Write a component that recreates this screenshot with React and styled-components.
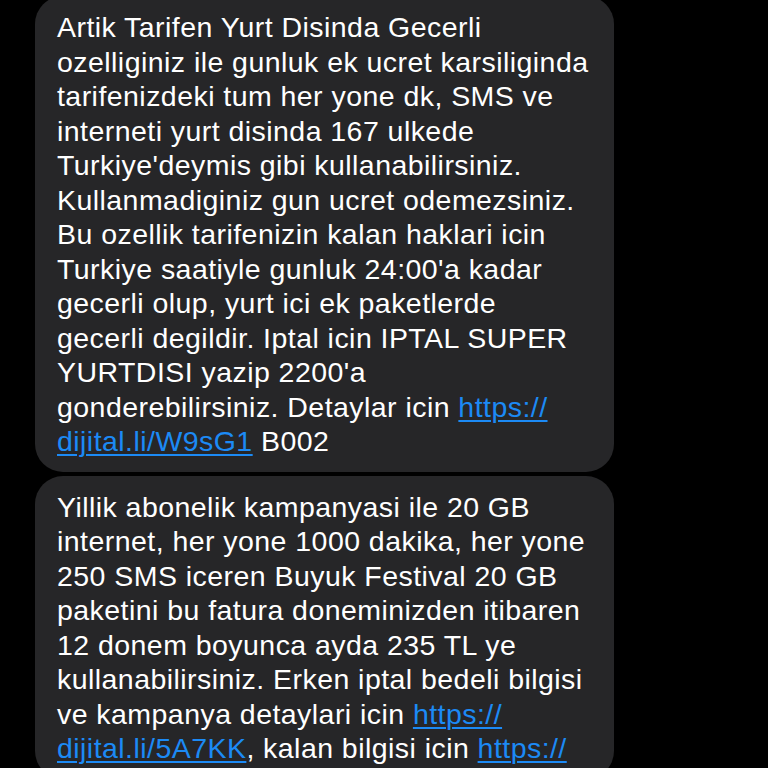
import React from "react";
import styled, { createGlobalStyle } from "styled-components";

const GlobalStyle = createGlobalStyle`
  html, body {
    margin: 0;
    padding: 0;
    background: #000;
    overflow: hidden;
  }
`;

const Thread = styled.div`
  display: flex;
  flex-direction: column;
  gap: 4px;
  padding-left: 35px;
  margin-top: -4px;
  height: 772px;
  overflow: hidden;
`;

const Bubble = styled.div`
  width: 579px;
  box-sizing: border-box;
  padding: 14px 0 13px 22px;
  background: #262628;
  border-radius: 28px;
  color: #fff;
  font-family: "Liberation Sans", Arial, sans-serif;
  font-size: 28.5px;
  letter-spacing: 0.45px;
  line-height: 34.5px;
  white-space: nowrap;
`;

const Line = styled.div``;

const Link = styled.a`
  color: #1c8af5;
  text-decoration: underline;
  text-decoration-thickness: 1.5px;
  text-underline-offset: 3px;
`;

const first = [
  "Artik Tarifen Yurt Disinda Gecerli",
  "ozelliginiz ile gunluk ek ucret karsiliginda",
  "tarifenizdeki tum her yone dk, SMS ve",
  "interneti yurt disinda 167 ulkede",
  "Turkiye'deymis gibi kullanabilirsiniz.",
  "Kullanmadiginiz gun ucret odemezsiniz.",
  "Bu ozellik tarifenizin kalan haklari icin",
  "Turkiye saatiyle gunluk 24:00'a kadar",
  "gecerli olup, yurt ici ek paketlerde",
  "gecerli degildir. Iptal icin IPTAL SUPER",
  "YURTDISI yazip 2200'a",
];

const second = [
  "Yillik abonelik kampanyasi ile 20 GB",
  "internet, her yone 1000 dakika, her yone",
  "250 SMS iceren Buyuk Festival 20 GB",
  "paketini bu fatura doneminizden itibaren",
  "12 donem boyunca ayda 235 TL ye",
  "kullanabilirsiniz. Erken iptal bedeli bilgisi",
];

export default function App() {
  return (
    <>
      <GlobalStyle />
      <Thread>
        <Bubble>
          {first.map((t) => (
            <Line key={t}>{t}</Line>
          ))}
          <Line>
            gonderebilirsiniz. Detaylar icin <Link>https://</Link>
          </Line>
          <Line>
            <Link>dijital.li/W9sG1</Link> B002
          </Line>
        </Bubble>
        <Bubble>
          {second.map((t) => (
            <Line key={t}>{t}</Line>
          ))}
          <Line>
            ve kampanya detaylari icin <Link>https://</Link>
          </Line>
          <Line>
            <Link>dijital.li/5A7KK</Link>, kalan bilgisi icin <Link>https://</Link>
          </Line>
        </Bubble>
      </Thread>
    </>
  );
}
